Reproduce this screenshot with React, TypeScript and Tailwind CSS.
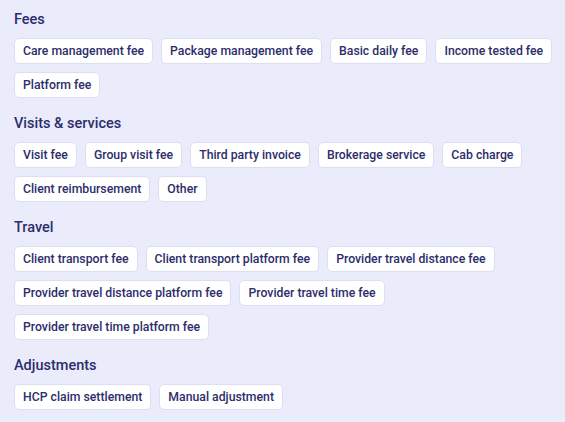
const SECTIONS: { title: string; items: string[] }[] = [
  {
    title: "Fees",
    items: [
      "Care management fee",
      "Package management fee",
      "Basic daily fee",
      "Income tested fee",
      "Platform fee",
    ],
  },
  {
    title: "Visits & services",
    items: [
      "Visit fee",
      "Group visit fee",
      "Third party invoice",
      "Brokerage service",
      "Cab charge",
      "Client reimbursement",
      "Other",
    ],
  },
  {
    title: "Travel",
    items: [
      "Client transport fee",
      "Client transport platform fee",
      "Provider travel distance fee",
      "Provider travel distance platform fee",
      "Provider travel time fee",
      "Provider travel time platform fee",
    ],
  },
  {
    title: "Adjustments",
    items: ["HCP claim settlement", "Manual adjustment"],
  },
];

export default function App() {
  return (
    <div
      className="w-[565px] h-[422px] bg-[#eaecfb] pl-[14px] pr-2 pt-[10px] text-[#2c2d6b] flex flex-col gap-4"
      style={{ fontFamily: "Roboto, 'Noto Sans', sans-serif" }}
    >
      {SECTIONS.map((section) => (
        <div key={section.title} className="flex flex-col gap-2">
          <h2 className="text-[14.5px] leading-5 font-medium">{section.title}</h2>
          <div className="flex flex-wrap gap-2">
            {section.items.map((item) => (
              <span
                key={item}
                className="h-[26px] px-[8px] flex items-center bg-white border border-[#dcdff0] rounded-[5px] text-[12.25px] font-medium"
              >
                {item}
              </span>
            ))}
          </div>
        </div>
      ))}
    </div>
  );
}
